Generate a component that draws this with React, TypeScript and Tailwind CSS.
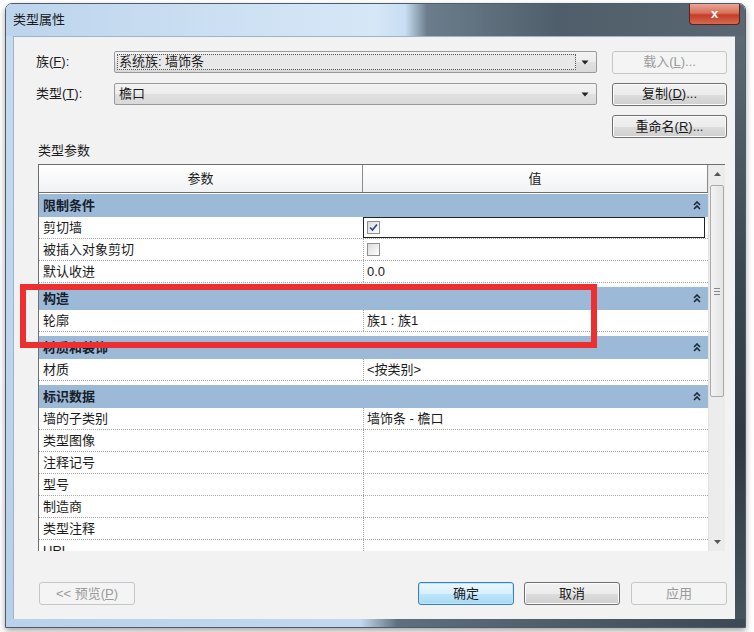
import type { ReactNode } from "react";

type Row = { name: string; value?: string; check?: "on" | "off"; selected?: boolean };
type Section = { title: string; rows: Row[] };

const sections: Section[] = [
  {
    title: "限制条件",
    rows: [
      { name: "剪切墙", check: "on", selected: true },
      { name: "被插入对象剪切", check: "off" },
      { name: "默认收进", value: "0.0" },
    ],
  },
  { title: "构造", rows: [{ name: "轮廓", value: "族1 : 族1" }] },
  { title: "材质和装饰", rows: [{ name: "材质", value: "<按类别>" }] },
  {
    title: "标识数据",
    rows: [
      { name: "墙的子类别", value: "墙饰条 - 檐口" },
      { name: "类型图像" },
      { name: "注释记号" },
      { name: "型号" },
      { name: "制造商" },
      { name: "类型注释" },
      { name: "URL" },
    ],
  },
];

function Key({ k }: { k: string }) {
  return (
    <>
      (<span className="underline">{k}</span>)
    </>
  );
}

function WinButton({
  children,
  disabled,
  primary,
  className = "",
}: {
  children: ReactNode;
  disabled?: boolean;
  primary?: boolean;
  className?: string;
}) {
  const look = disabled
    ? "border-[#c3c7ca] bg-[#f4f4f4] text-[#9a9a9a]"
    : primary
    ? "border-[#3c7fb1] bg-[linear-gradient(180deg,#eaf6fd_0%,#d9f0fc_50%,#bee6fd_51%,#a7d9f5_100%)] text-[#1a1a1a] shadow-[inset_0_0_0_1px_#bfe5f8]"
    : "border-[#707070] bg-[linear-gradient(180deg,#f2f2f2_0%,#ebebeb_50%,#dddddd_51%,#cfcfcf_100%)] text-[#1a1a1a] shadow-[inset_0_0_0_1px_#fbfbfb]";
  return (
    <div
      className={`flex h-[23px] items-center justify-center rounded-[3px] border text-[13px] ${look} ${className}`}
    >
      {children}
    </div>
  );
}

function Arrow() {
  return (
    <svg width="8" height="5" viewBox="0 0 8 5" className="shrink-0">
      <path d="M0.5 0.5 L7.5 0.5 L4 4.5 Z" fill="#222" />
    </svg>
  );
}

function Combo({ text, focus }: { text: string; focus?: boolean }) {
  return (
    <div className="flex h-[22px] w-[484px] items-center rounded-[2px] border border-[#9a9a9a] bg-[linear-gradient(180deg,#f3f3f3_0%,#ececec_50%,#e0e0e0_51%,#d9d9d9_100%)] pl-[2px] pr-[6px]">
      <div
        className={`flex h-[16px] flex-1 items-center pl-[1px] text-[13px] text-[#1a1a1a] ${
          focus ? "border border-dotted border-[#555] bg-[#e8e8e8]" : "border border-transparent"
        }`}
      >
        {text}
      </div>
      <div className="ml-[4px] flex w-[10px] justify-center">
        <Arrow />
      </div>
    </div>
  );
}

function Chevrons() {
  return (
    <svg width="8" height="9" viewBox="0 0 8 9">
      <path d="M1 4 L4 1 L7 4 M1 8 L4 5 L7 8" stroke="#1d2a36" strokeWidth="1.6" fill="none" />
    </svg>
  );
}

function Checkbox({ on }: { on: boolean }) {
  return (
    <div className="flex h-[13px] w-[13px] items-center justify-center border border-[#8f8f8f] bg-[linear-gradient(135deg,#dcdcdc,#ffffff)]">
      {on && (
        <svg width="9" height="9" viewBox="0 0 9 9">
          <path d="M1 4.5 L3.5 7 L8 1.5" stroke="#2a4a8a" strokeWidth="1.7" fill="none" />
        </svg>
      )}
    </div>
  );
}

function Scrollbar() {
  return (
    <div className="flex w-[17px] flex-col bg-[#ececec] border-l border-[#e2e2e2]">
      <div className="flex h-[18px] items-center justify-center">
        <svg width="7" height="4" viewBox="0 0 7 4">
          <path d="M0 4 L3.5 0 L7 4 Z" fill="#555" />
        </svg>
      </div>
      <div className="mx-[1px] mt-[2px] flex h-[212px] items-center justify-center rounded-[2px] border border-[#a9a9a9] bg-[linear-gradient(90deg,#f3f3f3,#e4e4e4)]">
        <div className="flex flex-col gap-[2px]">
          <div className="h-px w-[6px] bg-[#888]" />
          <div className="h-px w-[6px] bg-[#888]" />
          <div className="h-px w-[6px] bg-[#888]" />
        </div>
      </div>
      <div className="flex-1" />
      <div className="flex h-[18px] items-center justify-center">
        <svg width="7" height="4" viewBox="0 0 7 4">
          <path d="M0 0 L7 0 L3.5 4 Z" fill="#555" />
        </svg>
      </div>
    </div>
  );
}

function ParamTable() {
  return (
    <div className="ml-[2px] mt-[3px] flex h-[387px] w-[687px] overflow-hidden border-l border-t border-[#6f6f6f] bg-white">
      <div className="flex w-[670px] flex-col">
        <div className="flex h-[28px] shrink-0 border-b border-[#6f6f6f] bg-[linear-gradient(180deg,#ffffff,#f1f2f4)] text-[13px] text-[#1a1a1a]">
          <div className="flex w-[324px] items-center justify-center border-r border-[#8a8a8a]">参数</div>
          <div className="flex flex-1 items-center justify-center border-r border-[#8a8a8a]">值</div>
        </div>
        <div className="h-[1px] shrink-0" />
        {sections.map((s, si) => (
          <div key={s.title} className={`shrink-0 ${si > 0 ? "mt-[4px]" : ""}`}>
            <div className="flex h-[23px] items-center justify-between bg-[#9cb9d7] pl-[4px] pr-[7px] text-[13px] font-bold text-[#15202b]">
              <span>{s.title}</span>
              <Chevrons />
            </div>
            {s.rows.map((r) => (
              <div key={r.name} className="flex h-[22px] border-b border-dotted border-[#a8a8a8] text-[13px] text-[#1a1a1a]">
                <div className="flex w-[324px] items-center pl-[4px]">{r.name}</div>
                <div
                  className={`flex flex-1 items-center pl-[3px] ${
                    r.selected ? "mr-[3px] border border-[#222]" : "border-l border-dotted border-[#a8a8a8]"
                  }`}
                >
                  {r.check ? <Checkbox on={r.check === "on"} /> : r.value}
                </div>
              </div>
            ))}
          </div>
        ))}
      </div>
      <Scrollbar />
    </div>
  );
}

export default function App() {
  return (
    <div className="relative h-[632px] w-[754px] overflow-hidden bg-white pl-[5px] pt-[3px] font-['Liberation_Sans','Noto_Sans_CJK_SC',sans-serif]">
      <div className="relative flex h-[625px] w-[741px] flex-col overflow-hidden rounded-t-[7px] border border-[#4d5b66] shadow-[0_3px_6px_rgba(0,0,0,0.35)]">
        {/* title bar */}
        <div className="relative flex h-[32px] shrink-0 items-center bg-[linear-gradient(90deg,#bcd4ec_0%,#cde0f3_30%,#d6e7f7_50%,#c8def3_54%,#6b7d8c_57%,#4f5e6a_75%,#5a6772_100%)] pl-[7px] text-[13px] text-[#1b1b1b]">
          类型属性
          <div className="absolute left-[683px] top-0 flex h-[21px] w-[51px] items-center justify-center rounded-b-[4px] border border-t-0 border-[#5d2219] bg-[linear-gradient(180deg,#e9a596_0%,#d9705c_45%,#c43d29_55%,#d56a4f_100%)] text-[13px] font-bold text-white">
            x
          </div>
        </div>

        <div className="flex flex-1">
          <div className="w-[7px] bg-[linear-gradient(180deg,#c6dbef,#b7cfe8)]" />
          <div className="flex w-[722px] flex-col border-l border-t border-[#9fb3c7] bg-[#f2f2f2] pl-[22px] pr-[8px] text-[13px] text-[#1a1a1a]">
            <div className="mt-[14px] flex h-[22px] items-center">
              <div className="w-[78px]">
                族<Key k="F" />:
              </div>
              <Combo text="系统族: 墙饰条" focus />
              <WinButton disabled className="ml-[15px] w-[115px]">
                载入<Key k="L" />...
              </WinButton>
            </div>
            <div className="mt-[10px] flex h-[22px] items-center">
              <div className="w-[78px]">
                类型<Key k="T" />:
              </div>
              <Combo text="檐口" />
              <WinButton className="ml-[15px] w-[115px]">
                复制<Key k="D" />...
              </WinButton>
            </div>
            <div className="mt-[10px] flex h-[22px] justify-end">
              <WinButton className="w-[115px]">
                重命名<Key k="R" />...
              </WinButton>
            </div>
            <div className="mt-[4px] h-[20px] pl-[2px] leading-[20px]">类型参数</div>
            <ParamTable />
            <div className="mt-[31px] flex items-center">
              <WinButton disabled className="ml-[3px] w-[96px]">
                &lt;&lt; 预览<Key k="P" />
              </WinButton>
              <div className="flex-1" />
              <WinButton primary className="w-[96px]">
                确定
              </WinButton>
              <WinButton className="ml-[10px] w-[96px]">取消</WinButton>
              <WinButton disabled className="ml-[11px] w-[96px]">
                应用
              </WinButton>
            </div>
          </div>
          <div className="w-[10px] bg-[linear-gradient(180deg,#5d6a74,#3c4852_40%,#2f3a44_70%,#46525c)]" />
        </div>

        <div className="h-[8px] shrink-0 bg-[linear-gradient(90deg,#b9d1ea_0%,#c3d8ee_48%,#5f6f7c_53%,#3c4853_100%)]" />
      </div>

      {/* red highlight box */}
      <div className="absolute left-[20px] top-[284px] h-[64px] w-[577px] border-[6px] border-[#ee2f2f]" />
    </div>
  );
}
